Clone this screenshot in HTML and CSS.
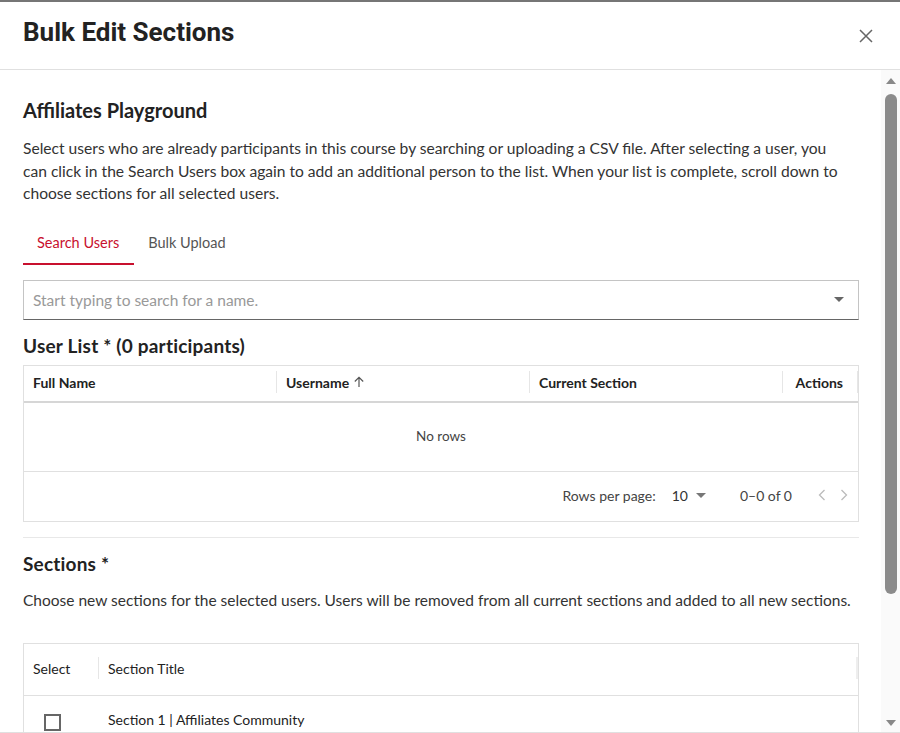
FILE: index.html
```html
<!DOCTYPE html>
<html lang="en">
<head>
    <meta charset="UTF-8">
    <title>Bulk Edit Sections</title>
    <link rel="stylesheet" href="styles.css">
</head>
<body>
  <div class="dialog">
    <header class="dialog-head">
      <h1>Bulk Edit Sections</h1>
      <button class="close" aria-label="Close">
        <svg width="14" height="14" viewBox="0 0 14 14"><path d="M1 1L13 13M13 1L1 13" stroke="#666" stroke-width="1.5" fill="none"/></svg>
      </button>
    </header>
    <div class="dialog-body">
      <main class="content">
        <h2>Affiliates Playground</h2>
        <p class="intro">Select users who are already participants in this course by searching or uploading a CSV file. After selecting a user, you can click in the Search Users box again to add an additional person to the list. When your list is complete, scroll down to choose sections for all selected users.</p>

        <nav class="tabs">
          <a class="tab active" href="#search">Search Users</a>
          <a class="tab" href="#upload">Bulk Upload</a>
        </nav>

        <div class="search">
          <span class="placeholder">Start typing to search for a name.</span>
          <svg width="10" height="5" viewBox="0 0 10 5"><path d="M0 0H10L5 5Z" fill="#666"/></svg>
        </div>

        <h3 class="list-title">User List * (0 participants)</h3>
        <div class="grid users">
          <div class="grid-head">
            <div class="col">Full Name</div>
            <div class="col">Username
              <svg width="12" height="12" viewBox="0 0 12 12"><path d="M6 11V1.5M1.8 5.5L6 1.3L10.2 5.5" stroke="#555" stroke-width="1.2" fill="none"/></svg>
            </div>
            <div class="col">Current Section</div>
            <div class="col last">Actions</div>
          </div>
          <div class="no-rows">No rows</div>
          <div class="grid-foot">
            <span>Rows per page:</span>
            <span class="per-page">10
              <svg width="10" height="5" viewBox="0 0 10 5"><path d="M0 0H10L5 5Z" fill="#777"/></svg>
            </span>
            <span class="range">0–0 of 0</span>
            <span class="pager">
              <svg width="8" height="12" viewBox="0 0 8 12"><path d="M6.5 1L1.5 6L6.5 11" stroke="#bbb" stroke-width="1.3" fill="none"/></svg>
              <svg width="8" height="12" viewBox="0 0 8 12"><path d="M1.5 1L6.5 6L1.5 11" stroke="#bbb" stroke-width="1.3" fill="none"/></svg>
            </span>
          </div>
        </div>

        <hr class="divider">

        <h3 class="sec-title">Sections *</h3>
        <p class="sec-note">Choose new sections for the selected users. Users will be removed from all current sections and added to all new sections.</p>

        <div class="grid sections">
          <div class="grid-head plain">
            <div class="col sel">Select</div>
            <div class="col title">Section Title</div>
          </div>
          <div class="row">
            <span class="check"></span>
            <span>Section 1 | Affiliates Community</span>
          </div>
        </div>
      </main>
      <div class="scrollbar">
        <svg width="10" height="6" viewBox="0 0 10 6"><path d="M0 6H10L5 0Z" fill="#888"/></svg>
        <div class="thumb"></div>
        <svg class="down" width="10" height="6" viewBox="0 0 10 6"><path d="M0 0H10L5 6Z" fill="#888"/></svg>
      </div>
    </div>
  </div>
</body>
</html>
```

FILE: styles.css
```css
*{
    box-sizing: border-box;
}
body{
    margin: 0;
    font-family: Lato, "Open Sans", sans-serif;
    color: #222;
    background: #fff;
}
.dialog{
    height: 733px;
    border-top: 2px solid #767676;
    border-bottom: 1px solid #e0e0e0;
    display: flex;
    flex-direction: column;
    overflow: hidden;
}
.dialog-head{
    height: 68px;
    flex: none;
    display: flex;
    align-items: center;
    justify-content: space-between;
    padding: 0 27px 0 23px;
    border-bottom: 1px solid #e0e0e0;
}
.dialog-head h1{
    margin: 0 0 8px;
    font-family: Roboto, sans-serif;
    font-size: 26px;
    font-weight: 700;
    color: #222;
}
.close{
    border: 0;
    background: none;
    padding: 0;
    display: flex;
}
.dialog-body{
    flex: 1;
    display: flex;
    overflow: hidden;
}
.content{
    flex: 1;
    padding: 0 22px 0 23px;
}
h2{
    margin: 28px 0 0;
    font-size: 20px;
    line-height: 24px;
    font-weight: 700;
}
.intro{
    margin: 15px 0 0;
    max-width: 830px;
    font-size: 15.6px;
    line-height: 22.5px;
    color: #333;
}
.tabs{
    display: flex;
    margin-top: 22px;
}
.tab{
    padding: 7px 15px 11px 14px;
    font-size: 14.5px;
    line-height: 18px;
    color: #555;
    text-decoration: none;
    border-bottom: 2px solid transparent;
}
.tab.active{
    color: #c8102e;
    border-bottom-color: #c8102e;
}
.search{
    margin-top: 15px;
    height: 40px;
    border: 1px solid #c4c4c4;
    border-bottom-color: #666;
    display: flex;
    align-items: center;
    justify-content: space-between;
    padding: 0 14px 0 9px;
}
.placeholder{
    font-size: 15.5px;
    color: #999;
}
h3{
    margin: 0;
    font-size: 19px;
    line-height: 22px;
    font-weight: 700;
    letter-spacing: 0.2px;
}
.list-title{
    margin-top: 15px;
}
.grid{
    border: 1px solid #e0e0e0;
    font-size: 14px;
    color: #222;
}
.users{
    margin-top: 8px;
}
.grid-head{
    display: flex;
    align-items: center;
    height: 37px;
    padding-bottom: 2px;
    border-bottom: 2px solid #d6d6d6;
}
.grid-head .col{
    flex: 1;
    height: 22px;
    display: flex;
    align-items: center;
    gap: 4px;
    padding-left: 9px;
    font-weight: 700;
    border-right: 1px solid #e6e6e6;
}
.grid-head .col.last{
    flex: none;
    width: 75px;
    justify-content: flex-end;
    padding-right: 14px;
}
.no-rows{
    height: 69px;
    padding-bottom: 2px;
    display: flex;
    align-items: center;
    justify-content: center;
    border-bottom: 1px solid #e0e0e0;
    font-size: 13.5px;
    color: #444;
}
.grid-foot{
    height: 49px;
    padding: 0 10px 2px 0;
    display: flex;
    align-items: center;
    justify-content: flex-end;
    color: #444;
}
.per-page{
    margin-left: 16px;
    display: flex;
    align-items: center;
    gap: 8px;
    color: #333;
}
.range{
    margin-left: 34px;
}
.pager{
    margin-left: 26px;
    display: flex;
    gap: 14px;
}
.divider{
    margin: 15px 0 0;
    border: 0;
    border-top: 1px solid #e8e8e8;
}
.sec-title{
    margin-top: 15px;
}
.sec-note{
    margin: 14px 0 0;
    font-size: 15.5px;
    line-height: 22px;
    color: #333;
}
.sections{
    margin-top: 32px;
}
.grid-head.plain{
    height: 52px;
    border-bottom-width: 1px;
    border-bottom-color: #e0e0e0;
}
.grid-head.plain .col{
    font-weight: 400;
}
.grid-head .col.sel{
    flex: none;
    width: 75px;
}
.grid-head .col.title{
    border-right: 2px solid #eee;
}
.row{
    height: 50px;
    display: flex;
    align-items: center;
    gap: 47px;
    padding: 0 0 2px 20px;
    font-size: 14px;
}
.check{
    width: 17px;
    height: 17px;
    border: 2px solid #666;
    margin-top: 5px;
}
.scrollbar{
    width: 19px;
    flex: none;
    background: #fafafa;
    display: flex;
    flex-direction: column;
    align-items: center;
    padding: 8px 0 6px;
}
.thumb{
    width: 12px;
    height: 500px;
    margin-top: 10px;
    border-radius: 6px;
    background: #8b8b8b;
}
.scrollbar .down{
    margin-top: auto;
}
```
